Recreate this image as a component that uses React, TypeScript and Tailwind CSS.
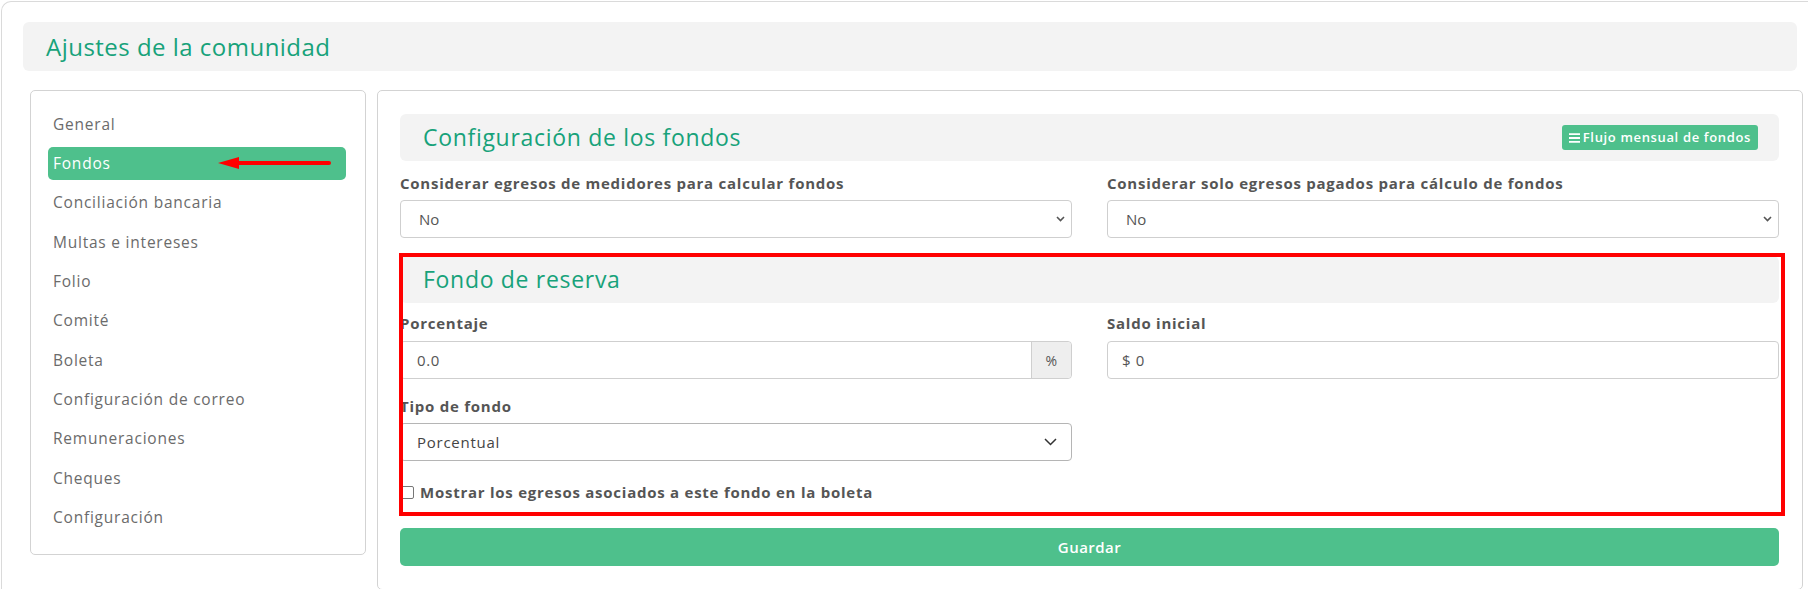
import { useState } from "react"

const menu = [
  "General",
  "Fondos",
  "Conciliación bancaria",
  "Multas e intereses",
  "Folio",
  "Comité",
  "Boleta",
  "Configuración de correo",
  "Remuneraciones",
  "Cheques",
  "Configuración",
]

function SmallChevron() {
  return (
    <svg width="9" height="6" viewBox="0 0 9 6" className="text-[#555]">
      <path d="M1 1l3.5 3.5L8 1" fill="none" stroke="currentColor" strokeWidth="1.6" />
    </svg>
  )
}

function BigChevron() {
  return (
    <svg width="13" height="8" viewBox="0 0 13 8" className="text-[#333]">
      <path d="M1 1l5.5 5.5L12 1" fill="none" stroke="currentColor" strokeWidth="1.5" />
    </svg>
  )
}

function Label({ children }: { children: React.ReactNode }) {
  return (
    <div className="text-[15px] font-bold leading-[20px] tracking-[0.05em] text-[#555]">{children}</div>
  )
}

export default function App() {
  const [active] = useState("Fondos")

  return (
    <div className="h-[589px] w-[1808px] overflow-hidden bg-white font-['Open_Sans',sans-serif]">
      <div className="ml-px mt-px h-[600px] rounded-tl-[10px] border-l border-t border-[#dadada] pl-[21px] pt-[20px]">
        {/* Header */}
        <div className="mr-[11px] flex h-[49px] items-center rounded-md bg-[#f3f3f3] pl-[23px]">
          <h1 className="text-[24px] font-normal tracking-[0.02em] text-[#17a27a]">Ajustes de la comunidad</h1>
        </div>

        <div className="ml-[7px] mt-[19px] flex items-start gap-[11px]">
          {/* Sidebar */}
          <aside className="h-[465px] w-[336px] flex-none rounded-[5px] border border-[#d3d3d3] pl-[17px] pr-[19px] pt-[17px]">
            <nav className="flex flex-col gap-[6.3px]">
              {menu.map((item) => {
                const on = item === active
                return (
                  <div
                    key={item}
                    className={[
                      "relative flex h-[33px] items-center rounded-[5px] pl-[5px] text-[15.5px] tracking-[0.05em]",
                      on ? "bg-[#4ec08c] font-medium text-white" : "text-[#6b6b6b]",
                    ].join(" ")}
                  >
                    {item}
                    {on ? (
                      <svg
                        width="113"
                        height="14"
                        viewBox="0 0 113 14"
                        className="absolute left-[170px] top-[9px]"
                      >
                        <path d="M0 7L21 1V13Z" fill="#f00" />
                        <path d="M18 7H111" stroke="#f00" strokeWidth="4" strokeLinecap="round" />
                      </svg>
                    ) : null}
                  </div>
                )
              })}
            </nav>
          </aside>

          {/* Main card */}
          <section className="h-[500px] w-[1426px] flex-none rounded-[5px] border border-[#d3d3d3] pl-[22px] pr-[23px] pt-[23px]">
            <div className="flex h-[47px] items-center justify-between rounded-md bg-[#f3f3f3] pl-[23px] pr-[21px]">
              <h2 className="text-[23px] font-normal tracking-[0.03em] text-[#17a27a]">Configuración de los fondos</h2>
              <button className="flex h-[25px] items-center gap-[3px] rounded-[3px] bg-[#4ec08c] px-[7px] text-[13px] font-semibold tracking-[0.05em] text-white">
                <svg width="11" height="10" viewBox="0 0 11 10">
                  <path d="M0 1.2H11M0 5H11M0 8.8H11" stroke="white" strokeWidth="1.8" />
                </svg>
                Flujo mensual de fondos
              </button>
            </div>

            <div className="mt-[12px] grid grid-cols-2 gap-x-[35px]">
              <div>
                <Label>Considerar egresos de medidores para calcular fondos</Label>
                <div className="mt-[7px] flex h-[38px] items-center justify-between rounded-[4px] border border-[#cfcfcf] pl-[18px] pr-[6px] text-[15px] text-[#555]">
                  No
                  <SmallChevron />
                </div>
              </div>
              <div>
                <Label>Considerar solo egresos pagados para cálculo de fondos</Label>
                <div className="mt-[7px] flex h-[38px] items-center justify-between rounded-[4px] border border-[#cfcfcf] pl-[18px] pr-[6px] text-[15px] text-[#555]">
                  No
                  <SmallChevron />
                </div>
              </div>
            </div>

            {/* Fondo de reserva */}
            <div className="relative mt-[18px]">
              <div className="flex h-[47px] items-center rounded-md bg-[#f3f3f3] pl-[23px]">
                <h2 className="text-[23px] font-normal tracking-[0.03em] text-[#17a27a]">Fondo de reserva</h2>
              </div>

              <div className="mt-[10px] grid grid-cols-2 gap-x-[35px]">
                <div>
                  <Label>Porcentaje</Label>
                  <div className="mt-[8px] flex h-[38px] rounded-[4px] border border-[#cfcfcf] text-[15px] tracking-[0.04em] text-[#555]">
                    <div className="flex flex-1 items-center pl-[16px]">0.0</div>
                    <div className="flex w-[40px] items-center justify-center rounded-r-[4px] border-l border-[#cfcfcf] bg-[#eeeeee] text-[14px]">
                      %
                    </div>
                  </div>
                  <div className="mt-[17px]">
                    <Label>Tipo de fondo</Label>
                  </div>
                  <div className="mt-[7px] flex h-[38px] items-center justify-between rounded-[4px] border border-[#b5b5b5] pl-[16px] pr-[14px] text-[15px] tracking-[0.05em] text-[#444]">
                    Porcentual
                    <BigChevron />
                  </div>
                </div>
                <div>
                  <Label>Saldo inicial</Label>
                  <div className="mt-[8px] flex h-[38px] items-center rounded-[4px] border border-[#cfcfcf] pl-[14px] text-[15px] tracking-[0.04em] text-[#555]">
                    $ 0
                  </div>
                </div>
              </div>

              <div className="mt-[21px] flex items-center gap-[6px]">
                <span className="ml-[1px] h-[13px] w-[13px] rounded-[2px] border border-[#777] bg-white" />
                <Label>Mostrar los egresos asociados a este fondo en la boleta</Label>
              </div>

              <div className="pointer-events-none absolute left-[-1px] top-[-3px] h-[263px] w-[1386px] border-4 border-[#ff0000]" />
            </div>

            <button className="mt-[26px] flex h-[38px] w-full items-center justify-center rounded-[5px] bg-[#4ec08c] text-[15px] font-semibold tracking-[0.03em] text-white">
              Guardar
            </button>
          </section>
        </div>
      </div>
    </div>
  )
}
